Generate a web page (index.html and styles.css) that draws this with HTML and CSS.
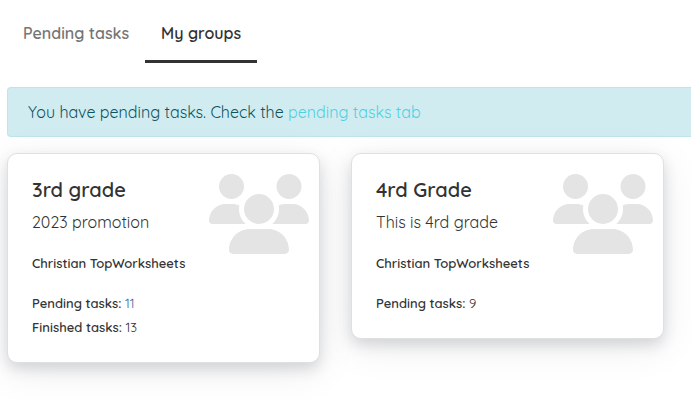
FILE: index.html
```html
<!DOCTYPE html>
<html lang="en">
<head>
<meta charset="utf-8">
<meta name="viewport" content="width=device-width, initial-scale=1">
<title>My groups</title>
<link rel="stylesheet" href="styles.css">
</head>
<body>
<svg class="sprite" aria-hidden="true">
  <symbol id="users" viewBox="0 0 640 512">
    <path d="M144 0a80 80 0 1 1 0 160A80 80 0 1 1 144 0zM512 0a80 80 0 1 1 0 160A80 80 0 1 1 512 0zM0 298.7C0 239.8 47.8 192 106.7 192h42.7c15.9 0 31 3.5 44.6 9.7c-1.3 7.2-1.9 14.7-1.9 22.3c0 38.2 16.8 72.5 43.3 96c-.2 0-.4 0-.7 0H21.3C9.6 320 0 310.4 0 298.7zM405.3 320c-.2 0-.4 0-.7 0c26.6-23.5 43.3-57.8 43.3-96c0-7.6-.7-15-1.9-22.3c13.6-6.3 28.7-9.7 44.6-9.7h42.7C592.2 192 640 239.8 640 298.7c0 11.8-9.6 21.3-21.3 21.3H405.3zM224 224a96 96 0 1 1 192 0 96 96 0 1 1-192 0zM128 485.3C128 411.7 187.7 352 261.3 352H378.7C452.3 352 512 411.7 512 485.3c0 14.7-11.9 26.7-26.7 26.7H154.7c-14.7 0-26.7-11.9-26.7-26.7z"/>
  </symbol>
</svg>
<nav class="tabs">
  <a class="tab" href="#pending">Pending tasks</a>
  <a class="tab tab-active" href="#groups" aria-current="page">My groups</a>
</nav>
<main>
  <p class="alert">You have pending tasks. Check the <a href="#pending">pending tasks tab</a></p>
  <div class="groups">
    <article class="card">
      <div class="card-text">
        <h2>3rd grade</h2>
        <p class="description">2023 promotion</p>
        <p class="teacher">Christian TopWorksheets</p>
        <p class="count"><strong>Pending tasks:</strong> <a href="#pending">11</a></p>
        <p class="count"><strong>Finished tasks:</strong> 13</p>
      </div>
      <svg class="icon" aria-hidden="true"><use href="#users"/></svg>
    </article>
    <article class="card">
      <div class="card-text">
        <h2>4rd Grade</h2>
        <p class="description">This is 4rd grade</p>
        <p class="teacher">Christian TopWorksheets</p>
        <p class="count"><strong>Pending tasks:</strong> 9</p>
      </div>
      <svg class="icon" aria-hidden="true"><use href="#users"/></svg>
    </article>
  </div>
</main>
</body>
</html>
```
FILE: styles.css
```css
* {
  box-sizing: border-box;
}

body {
  margin: 0;
  min-height: 100vh;
  padding: 4px 0 24px 7px;
  background: #fff;
  color: #333;
  font-family: Quicksand, Lato, sans-serif;
  font-size: 16px;
  font-weight: 400;
  line-height: 24px;
}

h2,
p {
  margin: 0;
}

a {
  text-decoration: none;
}

.sprite {
  display: none;
}

.tabs {
  display: flex;
  margin-bottom: 24px;
}

.tab {
  padding: 17px 16px 15px;
  border-bottom: 3px solid transparent;
  color: #757575;
  font-weight: 600;
}

.tab-active {
  border-color: #333;
  color: #333;
}

.alert {
  margin-bottom: 16px;
  padding: 12px 20px;
  border: 1px solid #bee5eb;
  border-right: 0;
  border-radius: 4px 0 0 4px;
  background: #d1ecf1;
  color: #0c5460;
}

.alert a {
  color: #4dd0e1;
}

.groups {
  display: grid;
  grid-template-columns: 1fr 1fr;
  align-items: start;
  gap: 31px;
  padding-right: 27px;
}

.card {
  display: flex;
  justify-content: space-between;
  padding: 20px 10px 23px 24px;
  border: 1px solid #dee0e1;
  border-radius: 10px;
  background: #fff;
  box-shadow: 0 8px 40px rgba(0, 0, 0, 0.08), 0 6px 14px rgba(60, 72, 88, 0.18);
}

.card h2 {
  margin-bottom: 8px;
  padding-top: 4px;
  font-size: 20px;
  font-weight: 600;
  line-height: 24px;
}

.description {
  margin-bottom: 17px;
}

.teacher,
.count {
  font-size: 13px;
}

.teacher {
  margin-bottom: 16px;
  font-weight: 600;
}

.count {
  font-weight: 400;
}

.count strong {
  font-weight: 600;
}

.count a {
  color: #3568a8;
}

.icon {
  flex: none;
  width: 100px;
  height: 80px;
  fill: #e4e4e4;
}
```
